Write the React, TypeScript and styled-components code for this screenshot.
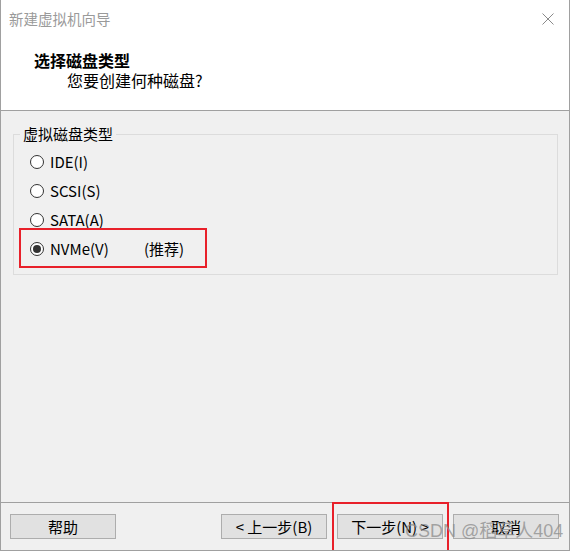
import React from "react";
import styled, { createGlobalStyle } from "styled-components";

const Global = createGlobalStyle`
  html, body { margin: 0; padding: 0; background: #ffffff; }
  body { font-family: "Noto Sans CJK SC", "Noto Sans", sans-serif; }
  * { box-sizing: border-box; }
`;

const Window = styled.div`
  position: relative;
  width: 570px;
  height: 551px;
  display: flex;
  flex-direction: column;
  border-left: 1px solid #a0a0a0;
  border-right: 1px solid #a0a0a0;
  border-bottom: 1px solid #a0a0a0;
  background: #f0f0f0;
  overflow: hidden;
  font-family: "Noto Sans CJK SC", "Noto Sans", sans-serif;
`;

const Header = styled.div`
  height: 111px;
  background: #ffffff;
  border-bottom: 1px solid #a0a0a0;
  display: flex;
  flex-direction: column;
`;

const TitleBar = styled.div`
  height: 38px;
  display: flex;
  align-items: center;
  justify-content: space-between;
  padding: 0 14px 0 8px;
`;

const TitleText = styled.span`
  font-size: 14.5px;
  line-height: 20px;
  color: #9a9a9a;
`;

const CloseButton = styled.div`
  width: 14px;
  height: 14px;
  display: flex;
  align-items: center;
  justify-content: center;
`;

const Heading = styled.div`
  margin-top: 12px;
  padding-left: 33px;
  font-size: 16px;
  line-height: 20px;
  font-weight: 700;
  color: #000;
`;

const SubHeading = styled.div`
  padding-left: 66px;
  font-size: 16px;
  line-height: 20px;
  color: #000;
`;

const Body = styled.div`
  flex: 1;
  padding: 13px 11px 0 12px;
`;

const Group = styled.fieldset`
  margin: 0;
  padding: 3px 0 11px 0;
  border: 1px solid #dcdcdc;
  display: flex;
  flex-direction: column;
`;

const Legend = styled.legend`
  margin-left: 6px;
  padding: 0 3px;
  font-size: 15px;
  line-height: 20px;
  color: #000;
`;

const Row = styled.label<{ $highlight?: boolean }>`
  position: relative;
  height: 29px;
  display: flex;
  align-items: center;
  padding-left: 16px;
  font-size: 15px;
  color: #000;
  ${(p) =>
    p.$highlight
      ? `
    &::after {
      content: "";
      position: absolute;
      left: 5px;
      top: -6px;
      width: 188px;
      height: 40px;
      border: 2px solid #e8202a;
      box-sizing: border-box;
    }
  `
      : ""}
`;

const Radio = styled.span<{ $checked?: boolean }>`
  width: 14px;
  height: 14px;
  border-radius: 50%;
  border: 1px solid #333;
  background: #fff;
  display: flex;
  align-items: center;
  justify-content: center;
  margin-right: 6px;
  flex-shrink: 0;
  &::before {
    content: "";
    width: 8px;
    height: 8px;
    border-radius: 50%;
    background: ${(p) => (p.$checked ? "#333" : "transparent")};
  }
`;

const LabelText = styled.span<{ $minWidth?: number }>`
  line-height: 20px;
  min-width: ${(p) => (p.$minWidth ? `${p.$minWidth}px` : "auto")};
`;

const Footer = styled.div`
  height: 48px;
  border-top: 1px solid #a0a0a0;
  display: flex;
  align-items: flex-start;
  padding: 11px 10px 0 9px;
`;

const Spacer = styled.div`
  flex: 1;
`;

const Button = styled.div<{ $annotated?: boolean }>`
  position: relative;
  width: 106px;
  height: 25px;
  background: #e1e1e1;
  border: 1px solid #adadad;
  display: flex;
  align-items: center;
  justify-content: center;
  font-size: 15px;
  line-height: 20px;
  color: #000;
  margin-left: 10px;
  &:first-child {
    margin-left: 0;
  }
  ${(p) =>
    p.$annotated
      ? `
    &::after {
      content: "";
      position: absolute;
      left: -6px;
      top: -13px;
      width: 117px;
      height: 60px;
      border: 2px solid #e8202a;
      box-sizing: border-box;
    }
  `
      : ""}
`;

const Watermark = styled.div`
  position: absolute;
  left: 404px;
  top: 519px;
  font-family: "Liberation Sans", "Noto Sans CJK SC", sans-serif;
  font-size: 18px;
  line-height: 24px;
  color: rgba(140, 140, 140, 0.75);
  white-space: nowrap;
  pointer-events: none;
`;

const options = [
  { label: "IDE(I)", checked: false },
  { label: "SCSI(S)", checked: false },
  { label: "SATA(A)", checked: false },
];

export default function App() {
  return (
    <>
      <Global />
      <Window>
        <Header>
          <TitleBar>
            <TitleText>新建虚拟机向导</TitleText>
            <CloseButton>
              <svg width="12" height="12" viewBox="0 0 12 12">
                <path d="M0.5 0.5 L11.5 11.5 M11.5 0.5 L0.5 11.5" stroke="#8a8a8a" strokeWidth="1" fill="none" />
              </svg>
            </CloseButton>
          </TitleBar>
          <Heading>选择磁盘类型</Heading>
          <SubHeading>您要创建何种磁盘?</SubHeading>
        </Header>
        <Body>
          <Group>
            <Legend>虚拟磁盘类型</Legend>
            {options.map((o) => (
              <Row key={o.label}>
                <Radio $checked={o.checked} />
                <LabelText>{o.label}</LabelText>
              </Row>
            ))}
            <Row $highlight>
              <Radio $checked />
              <LabelText $minWidth={94}>NVMe(V)</LabelText>
              <LabelText>(推荐)</LabelText>
            </Row>
          </Group>
        </Body>
        <Footer>
          <Button>帮助</Button>
          <Spacer />
          <Button>&lt; 上一步(B)</Button>
          <Button $annotated>下一步(N) &gt;</Button>
          <Button>取消</Button>
        </Footer>
        <Watermark>CSDN @稻草人404</Watermark>
      </Window>
    </>
  );
}
